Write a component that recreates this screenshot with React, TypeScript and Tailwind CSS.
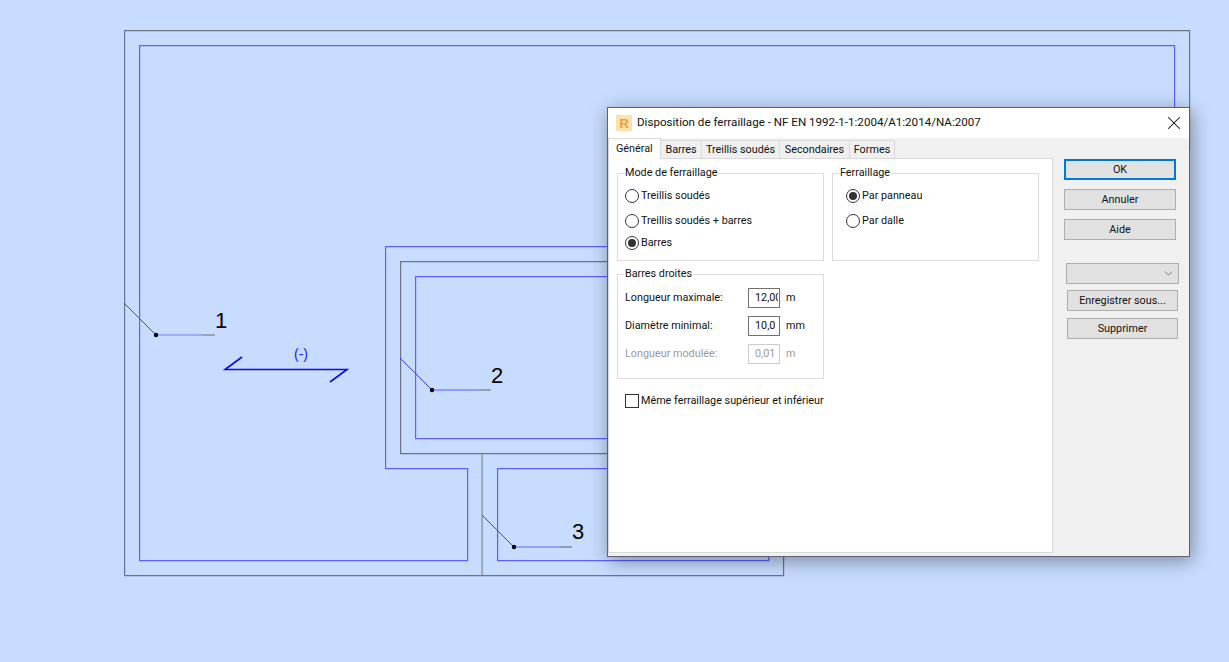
import React from 'react';
import { ChevronDown, X } from 'lucide-react';

const Radio = ({ label, checked, y }: { label: string; checked?: boolean; y: string }) => (
  <div className={`flex items-center h-[14px] ${y}`}>
    <span className="w-[14px] h-[14px] rounded-full border border-[#333] bg-white flex items-center justify-center shrink-0">
      {checked && <span className="w-[8px] h-[8px] rounded-full bg-[#333]" />}
    </span>
    <span className="ml-[2px] mt-px whitespace-nowrap">{label}</span>
  </div>
);

const Group = ({ title, className, children }: { title: string; className: string; children?: React.ReactNode }) => (
  <fieldset className={`border border-[#dcdcdc] p-0 m-0 ${className}`}>
    <legend className="ml-[6px] px-[1px] leading-[14px]">{title}</legend>
    {children}
  </fieldset>
);

const Field = ({ label, value, unit, disabled }: { label: string; value: string; unit: string; disabled?: boolean }) => (
  <div className={`flex items-center h-[20px] ${disabled ? 'text-[#9a9a9a]' : ''}`}>
    <span className="w-[123px] whitespace-nowrap">{label}</span>
    <span className={`w-[32px] h-[20px] border bg-white pl-[6px] leading-[18px] ${disabled ? 'border-[#ccc]' : 'border-[#707070]'}`}>
      <span className="block w-[23px] overflow-hidden whitespace-nowrap">{value}</span>
    </span>
    <span className="ml-[6px]">{unit}</span>
  </div>
);

const Btn = ({ label, className }: { label: string; className: string }) => (
  <div className={`h-[21px] pt-px bg-[#e1e1e1] border border-[#adadad] flex items-center justify-center ${className}`}>{label}</div>
);

const tabs = [
  { label: 'Barres', w: 'w-[41px]' },
  { label: 'Treillis soudés', w: 'w-[78px]' },
  { label: 'Secondaires', w: 'w-[70px]' },
  { label: 'Formes', w: 'w-[45px]' },
];

const Drawing = () => (
  <svg className="absolute inset-0" width="1229" height="662" fill="none">
    <g transform="translate(0.1 0.1)" strokeWidth="1.2">
      <g stroke="#6a7484">
        <path d="M1189.5 150V30.5H124.5V575.5H783.5V500" />
        <path d="M700 261.5H400.5V453.5H700" />
        <path d="M482 453.5V575.5" stroke="#7c8798" />
      </g>
      <g stroke="#5c60ff">
        <path d="M1174.5 120V45.5H139.5V560.5H467.5V468.5H385.5V246.5H700" />
        <path d="M700 276.5H415.5V438.5H700" />
        <path d="M700 468.5H497.5V560.5H768.5V500" />
      </g>
    </g>
    <g stroke="#3a40f0" strokeWidth="1">
      <path d="M124 303L156 335" />
      <path d="M400 358L432 390" />
      <path d="M482 515L514 547" />
    </g>
    <path d="M156 335H202" stroke="#8f9cff" strokeWidth="1.6" />
    <path d="M202 335H215" stroke="#8c95a8" strokeWidth="1.6" />
    <path d="M432 390H478" stroke="#7a88ff" strokeWidth="1.4" />
    <path d="M478 390H491" stroke="#7c8798" strokeWidth="1.4" />
    <path d="M514 547H560" stroke="#5c68ff" strokeWidth="1.2" />
    <path d="M560 547H572" stroke="#6a7484" strokeWidth="1.2" />
    <circle cx="156" cy="335" r="2.2" fill="#000" />
    <circle cx="432" cy="390" r="2.2" fill="#000" />
    <circle cx="514" cy="547" r="2.2" fill="#000" />
    <path d="M242 357L225 369.5H347L330 382" stroke="#0a0ae6" strokeWidth="1.6" />
  </svg>
);

export default function App() {
  return (
    <div className="relative w-[1229px] h-[662px] overflow-hidden bg-[#c8dcff] font-['Roboto',sans-serif] text-[10.8px] text-[#111]">
      <Drawing />
      <span className="absolute left-[215px] top-[307px] text-[22px] leading-[28px] font-['Liberation_Sans',sans-serif] text-black">1</span>
      <span className="absolute left-[491px] top-[362px] text-[22px] leading-[28px] font-['Liberation_Sans',sans-serif] text-black">2</span>
      <span className="absolute left-[572px] top-[518px] text-[22px] leading-[28px] font-['Liberation_Sans',sans-serif] text-black">3</span>
      <span className="absolute left-[294px] top-[346px] text-[14px] leading-[16px] font-['Liberation_Sans',sans-serif] text-[#1a1ae6]">(-)</span>

      <div className="absolute left-[607px] top-[107px] w-[583px] h-[450px] border border-[#5a6470] bg-[#f0f0f0] shadow-[2px_4px_18px_rgba(0,0,0,0.38)] flex flex-col">
        <div className="h-[30px] bg-white flex items-center pl-[8px] pr-[4px] shrink-0">
          <svg className="-mt-px" width="16" height="16" viewBox="0 0 16 16">
            <rect width="16" height="16" fill="#fbe0b0" />
            <text x="3.5" y="13" fontSize="13" fontWeight="700" fill="#eda028" fontFamily="Liberation Sans">R</text>
          </svg>
          <span className="ml-[5px] -mt-px text-[11.6px] whitespace-nowrap">Disposition de ferraillage - NF EN 1992-1-1:2004/A1:2014/NA:2007</span>
          <X className="ml-auto -mt-px" size={22} strokeWidth={1.1} color="#111" />
        </div>
        <div className="flex flex-1 min-h-0">
          <div className="w-[445px] flex flex-col pb-[3px]">
            <div className="flex items-end h-[21px] shrink-0 relative z-10">
              <div className="h-[21px] w-[53px] bg-white border border-b-0 border-[#d9d9d9] pl-[7px] pt-px leading-[18px]">Général</div>
              {tabs.map((t) => (
                <div key={t.label} className={`h-[19px] pt-[2px] ${t.w} bg-[#f0f0f0] border border-l-0 border-[#d9d9d9] flex items-center justify-center whitespace-nowrap`}>{t.label}</div>
              ))}
            </div>
            <div className="flex-1 bg-white border border-[#d9d9d9] -mt-px pl-[8px] pt-[7px] relative">
              <div className="flex gap-[8px]">
                <Group title="Mode de ferraillage" className="w-[207px] h-[95px]">
                  <div className="pl-[7px]">
                    <Radio label="Treillis soudés" y="mt-[9px]" />
                    <Radio label="Treillis soudés + barres" y="mt-[11px]" />
                    <Radio label="Barres" checked y="mt-[8px]" />
                  </div>
                </Group>
                <Group title="Ferraillage" className="w-[207px] h-[95px]">
                  <div className="pl-[13px]">
                    <Radio label="Par panneau" checked y="mt-[9px]" />
                    <Radio label="Par dalle" y="mt-[11px]" />
                  </div>
                </Group>
              </div>
              <Group title="Barres droites" className="w-[207px] h-[112px] mt-[6px]">
                <div className="pl-[7px] pt-[7px] flex flex-col gap-[8px]">
                  <Field label="Longueur maximale:" value="12,00" unit="m" />
                  <Field label="Diamètre minimal:" value="10,0" unit="mm" />
                  <Field label="Longueur modulée:" value="0,01" unit="m" disabled />
                </div>
              </Group>
              <div className="flex items-center mt-[14px] ml-[8px]">
                <span className="w-[14px] h-[14px] border border-[#333] bg-white shrink-0" />
                <span className="ml-[2px] whitespace-nowrap">Même ferraillage supérieur et inférieur</span>
              </div>
            </div>
          </div>
          <div className="flex-1 pl-[11px] pt-[21px]">
            <Btn label="OK" className="w-[112px] !border-2 !border-[#0078d7]" />
            <Btn label="Annuler" className="w-[112px] mt-[9px]" />
            <Btn label="Aide" className="w-[112px] mt-[9px]" />
            <div className="w-[113px] h-[21px] ml-[2px] mt-[23px] bg-[#e1e1e1] border border-[#adadad] flex items-center justify-end pr-[3px]">
              <ChevronDown size={13} strokeWidth={1.2} color="#444" />
            </div>
            <Btn label="Enregistrer sous..." className="w-[111px] ml-[3px] mt-[6px]" />
            <Btn label="Supprimer" className="w-[111px] ml-[3px] mt-[7px]" />
          </div>
        </div>
      </div>
    </div>
  );
}
